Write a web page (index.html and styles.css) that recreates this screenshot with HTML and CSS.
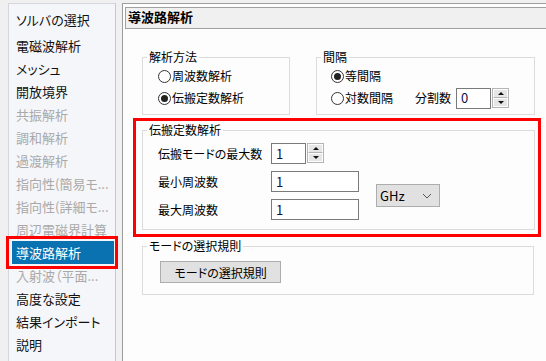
FILE: index.html
```html
<!DOCTYPE html>
<html lang="ja">
<head>
<meta charset="utf-8">
<title>導波路解析</title>
<link rel="stylesheet" href="styles.css">
</head>
<body>
<div class="app">
  <nav class="sidebar">
    <div class="item first">ソルバの選択</div>
    <div class="item">電磁波解析</div>
    <div class="item">メッシュ</div>
    <div class="item">開放境界</div>
    <div class="item disabled">共振解析</div>
    <div class="item disabled">調和解析</div>
    <div class="item disabled">過渡解析</div>
    <div class="item disabled">指向性(簡易モ...</div>
    <div class="item disabled">指向性(詳細モ...</div>
    <div class="item disabled">周辺電磁界計算</div>
    <div class="item selected">導波路解析</div>
    <div class="item disabled">入射波（平面...</div>
    <div class="item">高度な設定</div>
    <div class="item">結果インポート</div>
    <div class="item">説明</div>
  </nav>
  <main class="main">
    <div class="header">導波路解析</div>
    <div class="content">
      <div class="top-row">
        <fieldset class="group group-method">
          <legend>解析方法</legend>
          <div class="radio-row"><span class="radio"></span><span>周波数解析</span></div>
          <div class="radio-row"><span class="radio checked"></span><span>伝搬定数解析</span></div>
        </fieldset>
        <fieldset class="group group-interval">
          <legend>間隔</legend>
          <div class="radio-row"><span class="radio checked"></span><span>等間隔</span></div>
          <div class="radio-row">
            <span class="radio"></span><span>対数間隔</span>
            <span class="div-label">分割数</span>
            <span class="input short">0</span>
            <span class="spinner"><span class="spin up"></span><span class="spin down"></span></span>
          </div>
        </fieldset>
      </div>
      <div class="highlight">
        <fieldset class="group group-prop">
          <legend>伝搬定数解析</legend>
          <div class="grid">
            <span class="label r1">伝搬モードの最大数</span>
            <span class="num-cell r1"><span class="input short">1</span><span class="spinner"><span class="spin up"></span><span class="spin down"></span></span></span>
            <span class="label r2">最小周波数</span>
            <span class="input wide r2">1</span>
            <span class="label r3">最大周波数</span>
            <span class="input wide r3">1</span>
            <span class="select"><span>GHz</span><svg width="10" height="6" viewBox="0 0 10 6"><path d="M1 1 L5 5 L9 1" fill="none" stroke="#555" stroke-width="1"/></svg></span>
          </div>
        </fieldset>
      </div>
      <fieldset class="group group-mode">
        <legend>モードの選択規則</legend>
        <button class="btn">モードの選択規則</button>
      </fieldset>
    </div>
  </main>
</div>
</body>
</html>
```

FILE: styles.css
```css
* { box-sizing: border-box; }
html, body { margin: 0; padding: 0; }
body {
  background: #f0f0f0;
  font-family: "Noto Sans CJK JP", "Noto Sans", sans-serif;
  font-feature-settings: "palt";
  color: #000;
  width: 546px;
  height: 361px;
  overflow: hidden;
}
.app {
  display: flex;
  padding-top: 3px;
  height: 361px;
}
.sidebar {
  width: 108px;
  margin-left: 8px;
  background: #f5f6f9;
  border: 1px solid #d6d6de;
  border-right-color: #c6c6d6;
  border-bottom: none;
  padding: 4px 1px 0 3px;
  flex: none;
}
.item {
  height: 23px;
  line-height: 23px;
  font-size: 13px;
  padding-left: 4px;
  white-space: nowrap;
  overflow: visible;
  color: #111;
  position: relative;
}
.item.first { margin-bottom: 3px; }
.item.disabled { color: #a9a9a9; }
.item.selected {
  background: #0a72b0;
  color: #fff;
}
.item.selected::after {
  content: "";
  position: absolute;
  left: -6px;
  right: -4px;
  top: -5px;
  bottom: -5px;
  border: 3px solid #f00;
}
.main {
  flex: 1;
  margin-left: 6px;
  background: #fdfdfd;
  border-top: 1px solid #a0a0a0;
  border-left: 1px solid #9c9c9c;
  padding: 3px 0 0 2px;
  min-width: 0;
}
.header {
  height: 22px;
  background: #f0f0f0;
  border: 1px solid #a0a0a0;
  border-right: none;
  font-size: 13px;
  font-weight: bold;
  line-height: 18px;
  padding-left: 2px;
}
.content {
  width: 408px;
  margin-left: 8px;
  padding-top: 20px;
}
.top-row {
  display: flex;
  gap: 26px;
  margin-left: 9px;
}
.group {
  margin: 0;
  border: 1px solid #dcdcdc;
  padding: 0 4px;
  min-width: 0;
  font-size: 12px;
}
.group legend {
  padding: 0 2px;
  line-height: 16px;
  font-size: 12px;
}
.group-method { width: 148px; padding-bottom: 5px; }
.group-interval { width: 219px; padding-bottom: 5px; }
.radio-row {
  display: flex;
  align-items: center;
  height: 22px;
  line-height: 16px;
}
.group-method .radio-row { margin-left: 11px; }
.group-interval .radio-row { margin-left: 10px; }
.radio {
  width: 13px;
  height: 13px;
  border: 1px solid #333;
  border-radius: 50%;
  background: #fff;
  display: flex;
  align-items: center;
  justify-content: center;
  margin-right: 1px;
  flex: none;
}
.radio.checked::before {
  content: "";
  width: 7px;
  height: 7px;
  border-radius: 50%;
  background: #222;
}
.div-label { margin-left: 22px; margin-right: 5px; }
.input {
  display: flex;
  align-items: center;
  height: 21px;
  background: #fff;
  border: 1px solid #7a7a7a;
  padding-left: 4px;
  font-size: 13px;
  color: #10104a;
}
.input.short { width: 35px; }
.input.wide { width: 88px; }
.spinner {
  display: flex;
  flex-direction: column;
  width: 17px;
  height: 20px;
  border: 1px solid #b4b4b4;
  margin-left: 1px;
  flex: none;
}
.spin {
  flex: 1;
  background: #e6e6e6;
  border: 1px solid #fdfdfd;
  display: flex;
  align-items: center;
  justify-content: center;
}
.spin.up { border-bottom-color: #b4b4b4; }
.spin.up::before {
  content: "";
  border-left: 3px solid transparent;
  border-right: 3px solid transparent;
  border-bottom: 3px solid #111;
}
.spin.down::before {
  content: "";
  border-left: 3px solid transparent;
  border-right: 3px solid transparent;
  border-top: 3px solid #111;
}
.highlight {
  margin-top: 3px;
  border: 3px solid #f00;
  padding: 1px 3px 4px 6px;
}
.group-prop { padding-bottom: 9px; }
.grid {
  display: grid;
  grid-template-columns: 96px 88px 64px;
  grid-template-rows: 21px 21px 21px;
  column-gap: 17px;
  row-gap: 7px;
  margin: 5px 0 0 11px;
  align-items: center;
}
.r1 { grid-row: 1; }
.r2 { grid-row: 2; }
.r3 { grid-row: 3; }
.label { grid-column: 1; line-height: 16px; white-space: nowrap; }
.num-cell, .input.wide { grid-column: 2; }
.num-cell { display: flex; align-items: flex-start; }
.select {
  grid-column: 3;
  grid-row: 2 / span 2;
  height: 23px;
  width: 64px;
  background: #e1e1e1;
  border: 1px solid #adadad;
  display: flex;
  align-items: center;
  justify-content: space-between;
  padding: 0 7px 0 3px;
  font-size: 13px;
}
.group-mode {
  margin: 1px 7px 0 9px;
  padding-bottom: 11px;
}
.btn {
  display: block;
  margin: 7px 0 0 13px;
  width: 121px;
  height: 22px;
  background: #e1e1e1;
  border: 1px solid #adadad;
  font-family: inherit;
  font-feature-settings: "palt";
  font-size: 12px;
  color: #000;
  padding: 0;
}
```
